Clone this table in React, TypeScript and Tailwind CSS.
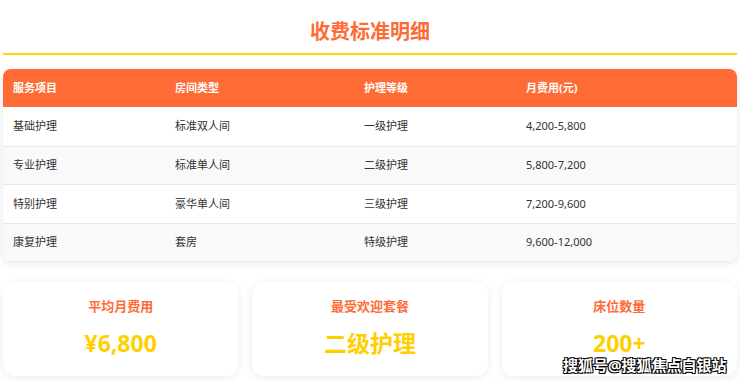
const rows = [
  { service: '基础护理', room: '标准双人间', level: '一级护理', fee: '4,200-5,800' },
  { service: '专业护理', room: '标准单人间', level: '二级护理', fee: '5,800-7,200' },
  { service: '特别护理', room: '豪华单人间', level: '三级护理', fee: '7,200-9,600' },
  { service: '康复护理', room: '套房', level: '特级护理', fee: '9,600-12,000' },
]

const stats = [
  { label: '平均月费用', value: '¥6,800' },
  { label: '最受欢迎套餐', value: '二级护理' },
  { label: '床位数量', value: '200+' },
]

const cols = 'grid grid-cols-[162px_189px_162px_1fr]'

export default function App() {
  return (
    <div
      className="relative w-[740px] h-[380px] overflow-hidden bg-white px-[3px]"
      style={{ fontFamily: '"Noto Sans", "Noto Sans CJK SC", sans-serif' }}
    >
      {/* Title */}
      <h2 className="pt-[18px] pb-[7px] text-center text-[20px] leading-[28px] font-bold text-[#ff6b35] border-b-[2px] border-[#ffd700]">
        收费标准明细
      </h2>

      {/* Fee table */}
      <div className="mt-[14px] rounded-[8px] overflow-hidden bg-white shadow-[0_2px_8px_rgba(0,0,0,0.1)]">
        <div className={`${cols} h-[38px] items-center bg-[#ff6b35] text-white text-[11px] font-bold`}>
          <div className="px-[10px]">服务项目</div>
          <div className="px-[10px]">房间类型</div>
          <div className="px-[10px]">护理等级</div>
          <div className="px-[10px]">月费用(元)</div>
        </div>
        {rows.map((row, i) => (
          <div
            key={row.service}
            className={`${cols} h-[38.5px] items-center text-[11px] text-[#333] ${i > 0 ? 'border-t border-[#e8e8e8]' : ''} ${i % 2 === 1 ? 'bg-[#f9f9f9]' : 'bg-white'}`}
          >
            <div className="px-[10px]">{row.service}</div>
            <div className="px-[10px]">{row.room}</div>
            <div className="px-[10px]">{row.level}</div>
            <div className="px-[10px]">{row.fee}</div>
          </div>
        ))}
      </div>

      {/* Summary cards */}
      <div className="mt-[21px] grid grid-cols-3 gap-[14px]">
        {stats.map((s) => (
          <div
            key={s.label}
            className="h-[94px] rounded-[12px] bg-white shadow-[0_2px_10px_rgba(0,0,0,0.08)] flex flex-col items-center pt-[15px]"
          >
            <div className="text-[13px] leading-[18px] font-bold text-[#ff6b35]">{s.label}</div>
            <div className="mt-[13px] text-[23px] leading-[30px] font-bold text-[#ffd000]">{s.value}</div>
          </div>
        ))}
      </div>

      {/* Watermark */}
      <div
        className="absolute left-[563px] top-[355px] text-[15px] leading-[20px] font-bold text-white whitespace-nowrap"
        style={{ textShadow: '-1px -1px 0 #000, 1px -1px 0 #000, -1px 1px 0 #000, 1px 1px 0 #000' }}
      >
        搜狐号@搜狐焦点白银站
      </div>
    </div>
  )
}
